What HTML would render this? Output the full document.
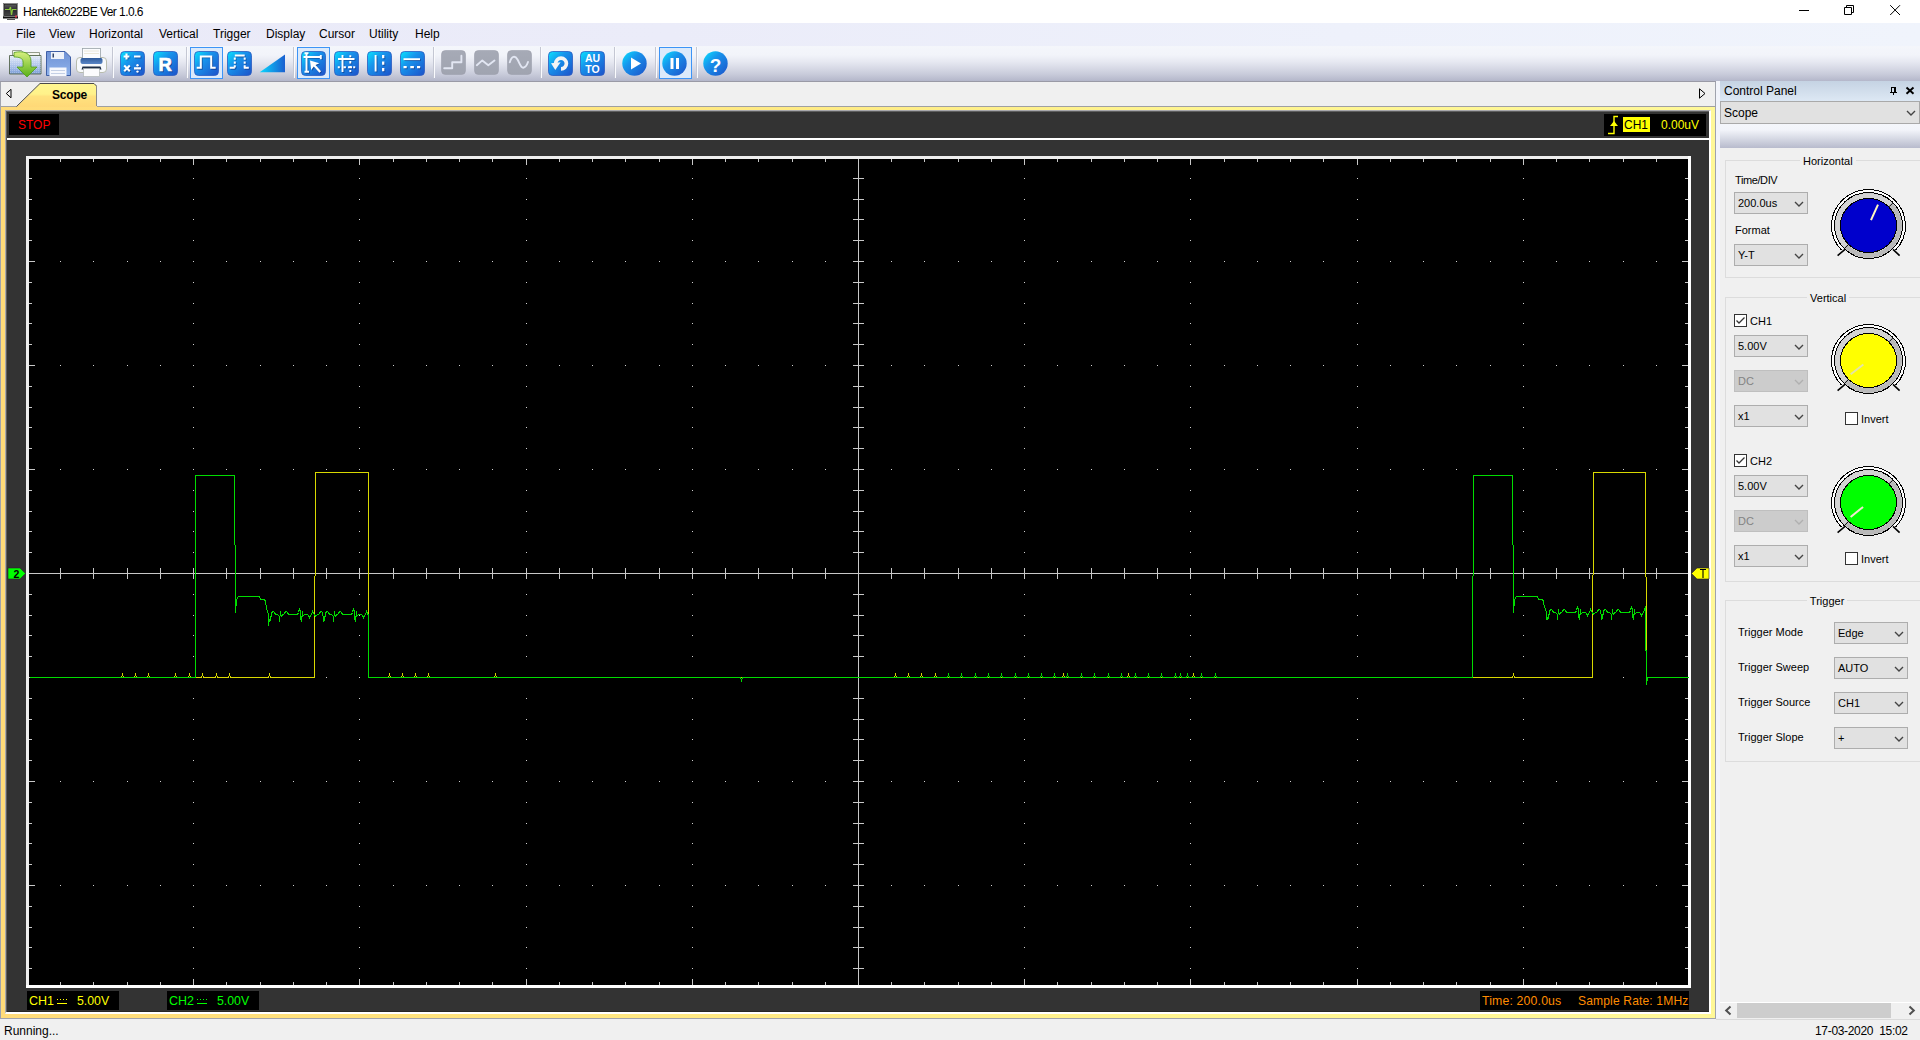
<!DOCTYPE html>
<html><head><meta charset="utf-8"><title>Hantek6022BE Ver 1.0.6</title>
<style>
*{margin:0;padding:0;box-sizing:border-box}
html,body{width:1920px;height:1040px;overflow:hidden;background:#f0f0f0;font-family:"Liberation Sans", sans-serif}
.t{position:absolute;white-space:pre;font-family:"Liberation Sans", sans-serif}
svg{position:absolute;display:block}
</style></head><body>
<div style="position:absolute;left:0px;top:0px;width:1920px;height:23px;background:#fff"></div>
<svg style="left:2px;top:2px" width="18" height="18" viewBox="0 0 18 18">
<defs><linearGradient id="gscr" x1="0" y1="0" x2="0" y2="1"><stop offset="0" stop-color="#5a5a5a"/><stop offset="0.5" stop-color="#2a2a2e"/><stop offset="1" stop-color="#444"/></linearGradient></defs>
<rect x="1.5" y="1.5" width="14" height="14" fill="#d4d4d4" stroke="#777" stroke-width="0.8"/>
<rect x="2.5" y="2.5" width="12" height="11" fill="url(#gscr)" stroke="#222" stroke-width="0.8"/>
<path d="M3 7.5h4.5l1-2.5l1 8l1-5.5h4" fill="none" stroke="#8cc83c" stroke-width="1.2"/>
<rect x="1" y="14.5" width="15" height="2" fill="#111"/><rect x="13" y="13.5" width="2" height="2" fill="#e04050"/>
<rect x="5" y="17" width="8" height="1" fill="#555"/>
</svg>
<div class="t" style="left:23px;top:5.84px;font-size:12px;line-height:12px;color:#000;letter-spacing:-0.55px">Hantek6022BE Ver 1.0.6</div>
<div style="position:absolute;left:1799px;top:10px;width:10px;height:1px;background:#000"></div>
<svg style="left:1843px;top:4px" width="12" height="12" viewBox="0 0 12 12"><path d="M1.5 3.5h7v7h-7z M3.5 3.5v-2h7v7h-2" fill="none" stroke="#000" stroke-width="1"/></svg>
<svg style="left:1889px;top:4px" width="12" height="12" viewBox="0 0 12 12"><path d="M1.2 1.2L11 11M11 1.2L1.2 11" fill="none" stroke="#000" stroke-width="1"/></svg>
<div style="position:absolute;left:0px;top:23px;width:1920px;height:23px;background:linear-gradient(90deg,#eaeaf8 0%,#ebecf9 35%,#eef1fb 70%,#f0f4fc 100%)"></div>
<div class="t" style="left:16px;top:27.84px;font-size:12px;line-height:12px;color:#000;">File</div>
<div class="t" style="left:49px;top:27.84px;font-size:12px;line-height:12px;color:#000;">View</div>
<div class="t" style="left:89px;top:27.84px;font-size:12px;line-height:12px;color:#000;">Horizontal</div>
<div class="t" style="left:159px;top:27.84px;font-size:12px;line-height:12px;color:#000;">Vertical</div>
<div class="t" style="left:213px;top:27.84px;font-size:12px;line-height:12px;color:#000;">Trigger</div>
<div class="t" style="left:266px;top:27.84px;font-size:12px;line-height:12px;color:#000;">Display</div>
<div class="t" style="left:319px;top:27.84px;font-size:12px;line-height:12px;color:#000;">Cursor</div>
<div class="t" style="left:369px;top:27.84px;font-size:12px;line-height:12px;color:#000;">Utility</div>
<div class="t" style="left:415px;top:27.84px;font-size:12px;line-height:12px;color:#000;">Help</div>
<div style="position:absolute;left:0px;top:46px;width:1920px;height:35px;background:linear-gradient(#f4f6fb 0px,#f2f4fa 9px,#e6e8f1 16px,#c9ccdb 28px,#b4b7ca 35px)"></div>
<div style="position:absolute;left:0px;top:81px;width:1920px;height:1px;background:#9a9aa6"></div>
<svg width="0" height="0" style="position:absolute"><defs>
<filter id="fsh" x="-20%" y="-20%" width="140%" height="140%"><feGaussianBlur stdDeviation="0.35"/></filter>
<linearGradient id="gb" x1="0" y1="0" x2="1" y2="1"><stop offset="0" stop-color="#08e4ff"/><stop offset="0.38" stop-color="#1794ec"/><stop offset="1" stop-color="#1d52c9"/></linearGradient>
<linearGradient id="gg" x1="0" y1="0" x2="0" y2="1"><stop offset="0" stop-color="#a6aab6"/><stop offset="1" stop-color="#a0a4b0"/></linearGradient>
<linearGradient id="gramp" x1="0" y1="0" x2="1" y2="0"><stop offset="0" stop-color="#0ad8ff"/><stop offset="1" stop-color="#1a5fd0"/></linearGradient>
<linearGradient id="gfold" x1="0" y1="0" x2="0" y2="1"><stop offset="0" stop-color="#cfe0f4"/><stop offset="1" stop-color="#7b9fd3"/></linearGradient>
<linearGradient id="garr" x1="0" y1="0" x2="0" y2="1"><stop offset="0" stop-color="#d8f080"/><stop offset="1" stop-color="#58b018"/></linearGradient>
</defs></svg>
<svg style="left:8px;top:48px" width="34" height="30" viewBox="0 0 34 30">
<defs><linearGradient id="gfb" x1="0" y1="0" x2="0" y2="1"><stop offset="0" stop-color="#e4ecf8"/><stop offset="0.5" stop-color="#b4c8ec"/><stop offset="1" stop-color="#7d9fd8"/></linearGradient>
<pattern id="pgrid" width="2" height="2" patternUnits="userSpaceOnUse"><rect width="2" height="2" fill="none"/><rect width="1" height="1" fill="#ffffff" opacity="0.25"/></pattern></defs>
<path d="M4.5 2.5h9l1.5 2h16.5v3H4.5z" fill="#f4f6f0" stroke="#7a8470" stroke-width="0.8"/>
<path d="M1.5 7.5h31.5v18.5H1.5z" fill="url(#gfb)" stroke="#56664e" stroke-width="0.9"/>
<path d="M1.5 7.5h31.5v18.5H1.5z" fill="url(#pgrid)"/>
<path d="M6 4.5c9-2 17 0 17 9v5.5h6l-10 10l-10-10h6v-5c0-4-4-5-9-5z" fill="url(#garr)" stroke="#4e9a1a" stroke-width="0.8"/>
</svg>
<svg style="left:46px;top:51px" width="26" height="26" viewBox="0 0 26 26">
<defs><linearGradient id="gfl" x1="0" y1="0" x2="0" y2="1"><stop offset="0" stop-color="#6f92d6"/><stop offset="1" stop-color="#8fb2ea"/></linearGradient></defs>
<path d="M0.5 0.5h18.5l5.5 5.5v18.5H0.5z" fill="url(#gfl)" stroke="#3f5fa6" stroke-width="1"/>
<rect x="5" y="1" width="13" height="7" fill="#eef2fa"/><rect x="6.5" y="2.5" width="1.5" height="4" fill="#34466a"/>
<rect x="3.5" y="16.5" width="17" height="8.5" fill="#f6f8fd"/><path d="M5 19.5h14M5 22.5h14" stroke="#c4d0e6" stroke-width="1"/>
</svg>
<svg style="left:75px;top:47px" width="33" height="31" viewBox="0 0 33 31">
<defs><linearGradient id="gpb" x1="0" y1="0" x2="0" y2="1"><stop offset="0" stop-color="#2f5a9a"/><stop offset="1" stop-color="#5a86c6"/></linearGradient></defs>
<rect x="1.5" y="10.5" width="30" height="15" rx="3.5" fill="#f7f9fc" stroke="#b8bcae" stroke-width="1"/>
<rect x="7.5" y="1.5" width="18" height="10" fill="#fbfcfe" stroke="#9aa4a8" stroke-width="0.8"/>
<path d="M9 4h15M9 6.5h15" stroke="#e8e2d0" stroke-width="0.8"/>
<path d="M7 11h19c1 0 1.5 1 1.5 2v2c0 1-1 2-2 2H7.5c-1 0-2-1-2-2v-2c0-1 .5-2 1.5-2z" fill="url(#gpb)"/>
<path d="M7.5 19.5h18l1 3h-20z" fill="#1c2c44"/>
<rect x="8.5" y="21.5" width="16" height="8" fill="#fbfbfd" stroke="#a8b0b0" stroke-width="0.6"/>
</svg>
<div style="position:absolute;left:112px;top:47px;width:1px;height:31px;background:#c4c7d3;box-shadow:1px 0 0 #fafbfe"></div>
<svg style="left:120px;top:51px" width="25" height="25" viewBox="0 0 25 25"><rect x="0.5" y="0.5" width="24" height="24" rx="4" fill="url(#gb)" stroke="#2a5cc0" stroke-width="0.8"/><g transform="translate(0.9,0.9)" opacity="0.55" filter="url(#fsh)"><path d="M6.5 2.6v5.8M3.6 5.5h5.8M14 5.5h6.5M4.2 14.6l5.6 5.6M9.8 14.6l-5.6 5.6M14 17.4h7" stroke="#102a70" stroke-width="2.1" fill="none"/><circle cx="17.5" cy="14.2" r="1.2" fill="#102a70"/><circle cx="17.5" cy="20.6" r="1.2" fill="#102a70"/></g><path d="M6.5 2.6v5.8M3.6 5.5h5.8M14 5.5h6.5M4.2 14.6l5.6 5.6M9.8 14.6l-5.6 5.6M14 17.4h7" stroke="#fff" stroke-width="2.1" fill="none"/><circle cx="17.5" cy="14.2" r="1.2" fill="#fff"/><circle cx="17.5" cy="20.6" r="1.2" fill="#fff"/></svg>
<svg style="left:153px;top:51px" width="25" height="25" viewBox="0 0 25 25"><rect x="0.5" y="0.5" width="24" height="24" rx="4" fill="url(#gb)" stroke="#2a5cc0" stroke-width="0.8"/><g transform="translate(0.9,0.9)" opacity="0.55" filter="url(#fsh)"><text x="12.3" y="20" text-anchor="middle" font-family="Liberation Sans" font-weight="bold" font-size="18.5" fill="#102a70" stroke="#102a70" stroke-width="0.7">R</text></g><text x="12.3" y="20" text-anchor="middle" font-family="Liberation Sans" font-weight="bold" font-size="18.5" fill="#fff" stroke="#fff" stroke-width="0.7">R</text></svg>
<div style="position:absolute;left:186px;top:47px;width:1px;height:31px;background:#c4c7d3;box-shadow:1px 0 0 #fafbfe"></div>
<div style="position:absolute;left:190px;top:47px;width:33px;height:32px;background:#dbeafb;border:1px solid #3d94f6"></div>
<svg style="left:194px;top:51px" width="25" height="25" viewBox="0 0 25 25"><rect x="0.5" y="0.5" width="24" height="24" rx="4" fill="url(#gb)" stroke="#2a5cc0" stroke-width="0.8"/><g transform="translate(0.9,0.9)" opacity="0.55" filter="url(#fsh)"><path d="M2.7 16.8h4.1V5.4h10.4v11.4h4.5" fill="none" stroke="#102a70" stroke-width="2"/></g><path d="M2.7 16.8h4.1V5.4h10.4v11.4h4.5" fill="none" stroke="#fff" stroke-width="2"/></svg>
<svg style="left:227px;top:51px" width="25" height="25" viewBox="0 0 25 25"><rect x="0.5" y="0.5" width="24" height="24" rx="4" fill="url(#gb)" stroke="#2a5cc0" stroke-width="0.8"/><g transform="translate(0.9,0.9)" opacity="0.55" filter="url(#fsh)"><path d="M2.7 16.8h5.1M16.8 16.8h5M7.8 4.5h9.9" stroke="#102a70" stroke-width="2" fill="none"/><path d="M7.8 6.5v2.2M7.8 10.5v2.2M7.8 14.3v2.2M17.7 6.5v2.2M17.7 10.5v2.2M17.7 14.3v2.2" stroke="#102a70" stroke-width="2" fill="none"/></g><path d="M2.7 16.8h5.1M16.8 16.8h5M7.8 4.5h9.9" stroke="#fff" stroke-width="2" fill="none"/><path d="M7.8 6.5v2.2M7.8 10.5v2.2M7.8 14.3v2.2M17.7 6.5v2.2M17.7 10.5v2.2M17.7 14.3v2.2" stroke="#fff" stroke-width="2" fill="none"/></svg>
<svg style="left:259px;top:54px" width="27" height="20" viewBox="0 0 27 20"><path d="M0.7 18.3L26 0.6V18.3z" fill="url(#gramp)"/></svg>
<div style="position:absolute;left:293px;top:47px;width:1px;height:31px;background:#c4c7d3;box-shadow:1px 0 0 #fafbfe"></div>
<div style="position:absolute;left:297px;top:47px;width:33px;height:32px;background:#dbeafb;border:1px solid #3d94f6"></div>
<svg style="left:301px;top:51px" width="25" height="25" viewBox="0 0 25 25"><rect x="0.5" y="0.5" width="24" height="24" rx="4" fill="url(#gb)" stroke="#2a5cc0" stroke-width="0.8"/><g transform="translate(0.9,0.9)" opacity="0.55" filter="url(#fsh)"><path d="M5.5 2v19M3.5 2.2h4M3.5 20.8h4.5M2.5 6h17.5M19.8 4v4.2" stroke="#102a70" stroke-width="1.9" fill="none"/><path d="M9 9.5L10.2 19l2.6-3.4l5.6 6.2l1.7-1.6l-5.6-6.1l3.9-1.9z" fill="#102a70"/></g><path d="M5.5 2v19M3.5 2.2h4M3.5 20.8h4.5M2.5 6h17.5M19.8 4v4.2" stroke="#fff" stroke-width="1.9" fill="none"/><path d="M9 9.5L10.2 19l2.6-3.4l5.6 6.2l1.7-1.6l-5.6-6.1l3.9-1.9z" fill="#fff"/></svg>
<svg style="left:334px;top:51px" width="25" height="25" viewBox="0 0 25 25"><rect x="0.5" y="0.5" width="24" height="24" rx="4" fill="url(#gb)" stroke="#2a5cc0" stroke-width="0.8"/><g transform="translate(0.9,0.9)" opacity="0.55" filter="url(#fsh)"><path d="M8.5 4v17M4 8h16.5" stroke="#102a70" stroke-width="1.9" fill="none"/><path d="M16.3 4.3v2M16.3 10v2.6M16.3 15v2.2M16.3 19v2M3.8 16.3h2M9.5 16.3h2.4M14 16.3h4M19.2 16.3h2" stroke="#102a70" stroke-width="1.9" fill="none"/></g><path d="M8.5 4v17M4 8h16.5" stroke="#fff" stroke-width="1.9" fill="none"/><path d="M16.3 4.3v2M16.3 10v2.6M16.3 15v2.2M16.3 19v2M3.8 16.3h2M9.5 16.3h2.4M14 16.3h4M19.2 16.3h2" stroke="#fff" stroke-width="1.9" fill="none"/></svg>
<svg style="left:367px;top:51px" width="25" height="25" viewBox="0 0 25 25"><rect x="0.5" y="0.5" width="24" height="24" rx="4" fill="url(#gb)" stroke="#2a5cc0" stroke-width="0.8"/><g transform="translate(0.9,0.9)" opacity="0.55" filter="url(#fsh)"><path d="M8.6 4v16.5" stroke="#102a70" stroke-width="1.9" fill="none"/><path d="M16.2 4v3.3M16.2 10.5v3.3M16.2 17v3.3" stroke="#102a70" stroke-width="2.3" fill="none"/></g><path d="M8.6 4v16.5" stroke="#fff" stroke-width="1.9" fill="none"/><path d="M16.2 4v3.3M16.2 10.5v3.3M16.2 17v3.3" stroke="#fff" stroke-width="2.3" fill="none"/></svg>
<svg style="left:400px;top:51px" width="25" height="25" viewBox="0 0 25 25"><rect x="0.5" y="0.5" width="24" height="24" rx="4" fill="url(#gb)" stroke="#2a5cc0" stroke-width="0.8"/><g transform="translate(0.9,0.9)" opacity="0.55" filter="url(#fsh)"><path d="M3.5 8.2h16.5" stroke="#102a70" stroke-width="1.9" fill="none"/><path d="M3.5 16.2h3.2M10.3 16.2h3.6M17 16.2h3.2" stroke="#102a70" stroke-width="2.3" fill="none"/></g><path d="M3.5 8.2h16.5" stroke="#fff" stroke-width="1.9" fill="none"/><path d="M3.5 16.2h3.2M10.3 16.2h3.6M17 16.2h3.2" stroke="#fff" stroke-width="2.3" fill="none"/></svg>
<div style="position:absolute;left:433px;top:47px;width:1px;height:31px;background:#c4c7d3;box-shadow:1px 0 0 #fafbfe"></div>
<svg style="left:441px;top:50px" width="25" height="25" viewBox="0 0 25 25"><rect x="0.5" y="0.5" width="24" height="24" rx="4" fill="url(#gg)" stroke="#9ca0ac" stroke-width="0.6"/><path d="M3.2 18.2h8V12.2h9.2V5.8" fill="none" stroke="#e2e6f2" stroke-width="1.9" stroke-linejoin="round" stroke-linecap="round"/></svg>
<svg style="left:474px;top:50px" width="25" height="25" viewBox="0 0 25 25"><rect x="0.5" y="0.5" width="24" height="24" rx="4" fill="url(#gg)" stroke="#9ca0ac" stroke-width="0.6"/><path d="M2.8 15.2L8.3 10.4L14.3 15.2L20.5 10.6" fill="none" stroke="#e2e6f2" stroke-width="1.9" stroke-linejoin="round" stroke-linecap="round"/></svg>
<svg style="left:507px;top:50px" width="25" height="25" viewBox="0 0 25 25"><rect x="0.5" y="0.5" width="24" height="24" rx="4" fill="url(#gg)" stroke="#9ca0ac" stroke-width="0.6"/><path d="M2.8 12.3C4.5 6 8 5 10.5 9.5S14 18 16.2 17.7S20 15 21 12" fill="none" stroke="#e2e6f2" stroke-width="1.9" stroke-linejoin="round" stroke-linecap="round"/></svg>
<div style="position:absolute;left:540px;top:47px;width:1px;height:31px;background:#c4c7d3;box-shadow:1px 0 0 #fafbfe"></div>
<svg style="left:548px;top:51px" width="25" height="25" viewBox="0 0 25 25"><rect x="0.5" y="0.5" width="24" height="24" rx="4" fill="url(#gb)" stroke="#2a5cc0" stroke-width="0.8"/><path d="M13 17.9A5.35 5.35 0 1 0 7.7 12.6" fill="none" stroke="#f4f4f4" stroke-width="3.7"/><path d="M3 12.3L12.6 11.2L7.3 18.9z" fill="#f4f4f4"/></svg>
<svg style="left:580px;top:51px" width="25" height="25" viewBox="0 0 25 25"><rect x="0.5" y="0.5" width="24" height="24" rx="4" fill="url(#gb)" stroke="#2a5cc0" stroke-width="0.8"/><text x="12.5" y="11" text-anchor="middle" font-family="Liberation Sans" font-weight="bold" font-size="10.5" fill="#fff">AU</text><text x="12.5" y="22" text-anchor="middle" font-family="Liberation Sans" font-weight="bold" font-size="10.5" fill="#fff">TO</text></svg>
<div style="position:absolute;left:614px;top:47px;width:1px;height:31px;background:#c4c7d3;box-shadow:1px 0 0 #fafbfe"></div>
<svg style="left:622px;top:51px" width="25" height="25" viewBox="0 0 25 25"><circle cx="12.5" cy="12.5" r="12.2" fill="url(#gb)"/><path d="M9 6.5v12l10-6z" fill="#fff"/></svg>
<div style="position:absolute;left:655px;top:47px;width:1px;height:31px;background:#c4c7d3;box-shadow:1px 0 0 #fafbfe"></div>
<div style="position:absolute;left:659px;top:47px;width:33px;height:32px;background:#dbeafb;border:1px solid #3d94f6"></div>
<svg style="left:662px;top:51px" width="25" height="25" viewBox="0 0 25 25"><circle cx="12.5" cy="12.5" r="12.2" fill="url(#gb)"/><rect x="8.5" y="7" width="3" height="11" fill="#fff"/><rect x="14" y="7" width="3" height="11" fill="#fff"/></svg>
<div style="position:absolute;left:696px;top:47px;width:1px;height:31px;background:#c4c7d3;box-shadow:1px 0 0 #fafbfe"></div>
<svg style="left:703px;top:51px" width="25" height="25" viewBox="0 0 25 25"><circle cx="12.5" cy="12.5" r="12.2" fill="url(#gb)"/><text x="12.5" y="20.5" text-anchor="middle" font-family="Liberation Sans" font-weight="bold" font-size="19" fill="#fff">?</text></svg>
<div style="position:absolute;left:0px;top:82px;width:1px;height:937px;background:#a0a3ad"></div>
<div style="position:absolute;left:1715px;top:82px;width:1px;height:937px;background:#a0a3ad"></div>
<div style="position:absolute;left:1px;top:82px;width:1714px;height:24px;background:#f0f0f0"></div>
<div style="position:absolute;left:1px;top:106px;width:1714px;height:1px;background:#a0a0a0"></div>
<svg style="left:16px;top:82px" width="84" height="26" viewBox="0 0 84 26">
<defs><linearGradient id="gtab" x1="0" y1="0" x2="0" y2="1"><stop offset="0" stop-color="#fff790"/><stop offset="0.45" stop-color="#fff28a"/><stop offset="0.55" stop-color="#ffe27e"/><stop offset="1" stop-color="#ffd877"/></linearGradient></defs>
<path d="M0.5 25 L24 1.5 H78 L81 4.5 V25 Z" fill="url(#gtab)"/>
<path d="M0.5 24.5 L24 1.5 H78 L80.5 4" fill="none" stroke="#4a4a4a" stroke-width="1"/>
<path d="M80.5 4 V24" fill="none" stroke="#8a8a8a" stroke-width="1"/>
</svg>
<div class="t" style="left:52px;top:88.84px;font-size:12px;line-height:12px;color:#000;font-weight:bold;letter-spacing:-0.2px">Scope</div>
<svg style="left:5px;top:88px" width="8" height="11" viewBox="0 0 8 11"><path d="M6 1.3V9.8L1.3 5.5z" fill="none" stroke="#000" stroke-width="1"/></svg>
<svg style="left:1698px;top:88px" width="8" height="11" viewBox="0 0 8 11"><path d="M1.5 0.8V10.2L7 5.5z" fill="none" stroke="#000" stroke-width="1"/></svg>
<div style="position:absolute;left:1px;top:107px;width:1714px;height:911px;background:linear-gradient(90deg,#ffdb79 0%,#ffe27c 23%,#ffec86 50%,#fff590 70%,#fff898 100%)"></div>
<div style="position:absolute;left:5px;top:110px;width:1706px;height:904px;background:#333;border-top:1px solid #a8a8ac;border-left:1px solid #a8a8ac;box-shadow:inset 1px 1px 0 #5e5e5e;border-bottom:2px solid #fff;border-right:2px solid #fff"></div>
<div style="position:absolute;left:7px;top:138px;width:1704px;height:2px;background:#fff"></div>
<div style="position:absolute;left:7px;top:1011px;width:1702px;height:1px;background:#262626"></div>
<div style="position:absolute;left:9px;top:114px;width:50px;height:21px;background:#000"></div>
<div class="t" style="left:18px;top:118.84px;font-size:12px;line-height:12px;color:#ff0000;">STOP</div>
<div style="position:absolute;left:1604px;top:114px;width:102px;height:22px;background:#000"></div>
<svg style="left:1606px;top:114px" width="14" height="21" viewBox="0 0 14 21"><path d="M2 19.5h6V2.5h4" fill="none" stroke="#ffff00" stroke-width="1.4"/><path d="M4 12h8L8 7z" fill="#ffff00"/></svg>
<div style="position:absolute;left:1623px;top:117px;width:27px;height:15px;background:#ffff00"></div>
<div class="t" style="left:1624px;top:118.84px;font-size:12px;line-height:12px;color:#000;">CH1</div>
<div class="t" style="left:1661px;top:118.84px;font-size:12px;line-height:12px;color:#ffff00;">0.00uV</div>
<div style="position:absolute;left:27px;top:991px;width:92px;height:19px;background:#000"></div>
<div class="t" style="left:29px;top:995.42px;font-size:12.5px;line-height:12.5px;color:#ffff00;">CH1</div>
<svg style="left:57px;top:999px" width="10" height="5" viewBox="0 0 10 5" shape-rendering="crispEdges"><path d="M0 0h1v1H0zM3 0h1v1H3zM6 0h1v1H6zM9 0h1v1H9zM0 4h10v1H0z" fill="#ffff00"/></svg>
<div class="t" style="left:77px;top:994.59px;font-size:12.3px;line-height:12.3px;color:#ffff00;">5.00V</div>
<div style="position:absolute;left:167px;top:991px;width:92px;height:19px;background:#000"></div>
<div class="t" style="left:169px;top:995.42px;font-size:12.5px;line-height:12.5px;color:#00ff00;">CH2</div>
<svg style="left:197px;top:999px" width="10" height="5" viewBox="0 0 10 5" shape-rendering="crispEdges"><path d="M0 0h1v1H0zM3 0h1v1H3zM6 0h1v1H6zM9 0h1v1H9zM0 4h10v1H0z" fill="#00ff00"/></svg>
<div class="t" style="left:217px;top:994.59px;font-size:12.3px;line-height:12.3px;color:#00ff00;">5.00V</div>
<div style="position:absolute;left:1480px;top:991px;width:209px;height:19px;background:#000"></div>
<div class="t" style="left:1482px;top:994.59px;font-size:12.3px;line-height:12.3px;color:#ff8c00;letter-spacing:0.15px">Time: 200.0us</div>
<div class="t" style="left:1578px;top:994.76px;font-size:12.1px;line-height:12.1px;color:#ff8c00;letter-spacing:0.13px">Sample Rate: 1MHz</div>
<svg style="left:7px;top:567px" width="20" height="14" viewBox="0 0 20 14"><path d="M1 1H13L18.5 6.5L13 12H1z" fill="#00ff00" stroke="#302030" stroke-width="0.6"/><text x="9.5" y="11" text-anchor="middle" font-family="Liberation Sans" font-weight="bold" font-size="10.5" fill="#000">2</text></svg>
<svg style="left:1690px;top:567px" width="20" height="14" viewBox="0 0 20 14"><path d="M19 1H7L1.5 6.5L7 12H19z" fill="#ffff00" stroke="#202030" stroke-width="0.6"/><path d="M10 2.5h6M13 2.5V11" stroke="#000" stroke-width="1.1"/></svg>
<svg style="left:26px;top:156px" width="1665" height="832" viewBox="0 0 1665 832" shape-rendering="crispEdges">
<rect x="0" y="0" width="1665" height="832" fill="#fff"/>
<rect x="0" y="0" width="1662" height="3" fill="#eeeeee"/><rect x="0" y="0" width="3" height="829" fill="#eeeeee"/>
<rect x="3" y="3" width="1659" height="826" fill="#000"/>
<path d="M832 3h1v826h-1zM3 417h1659v1h-1659zM34 412h1v11h-1zM34 3h1v3h-1zM34 826h1v3h-1zM67 412h1v11h-1zM67 3h1v3h-1zM67 826h1v3h-1zM101 412h1v11h-1zM101 3h1v3h-1zM101 826h1v3h-1zM134 412h1v11h-1zM134 3h1v3h-1zM134 826h1v3h-1zM167 412h1v11h-1zM167 3h1v6h-1zM167 823h1v6h-1zM200 412h1v11h-1zM200 3h1v3h-1zM200 826h1v3h-1zM234 412h1v11h-1zM234 3h1v3h-1zM234 826h1v3h-1zM267 412h1v11h-1zM267 3h1v3h-1zM267 826h1v3h-1zM300 412h1v11h-1zM300 3h1v3h-1zM300 826h1v3h-1zM333 412h1v11h-1zM333 3h1v6h-1zM333 823h1v6h-1zM367 412h1v11h-1zM367 3h1v3h-1zM367 826h1v3h-1zM400 412h1v11h-1zM400 3h1v3h-1zM400 826h1v3h-1zM433 412h1v11h-1zM433 3h1v3h-1zM433 826h1v3h-1zM466 412h1v11h-1zM466 3h1v3h-1zM466 826h1v3h-1zM500 412h1v11h-1zM500 3h1v6h-1zM500 823h1v6h-1zM533 412h1v11h-1zM533 3h1v3h-1zM533 826h1v3h-1zM566 412h1v11h-1zM566 3h1v3h-1zM566 826h1v3h-1zM599 412h1v11h-1zM599 3h1v3h-1zM599 826h1v3h-1zM633 412h1v11h-1zM633 3h1v3h-1zM633 826h1v3h-1zM666 412h1v11h-1zM666 3h1v6h-1zM666 823h1v6h-1zM699 412h1v11h-1zM699 3h1v3h-1zM699 826h1v3h-1zM732 412h1v11h-1zM732 3h1v3h-1zM732 826h1v3h-1zM766 412h1v11h-1zM766 3h1v3h-1zM766 826h1v3h-1zM799 412h1v11h-1zM799 3h1v3h-1zM799 826h1v3h-1zM865 412h1v11h-1zM865 3h1v3h-1zM865 826h1v3h-1zM898 412h1v11h-1zM898 3h1v3h-1zM898 826h1v3h-1zM932 412h1v11h-1zM932 3h1v3h-1zM932 826h1v3h-1zM965 412h1v11h-1zM965 3h1v3h-1zM965 826h1v3h-1zM998 412h1v11h-1zM998 3h1v6h-1zM998 823h1v6h-1zM1031 412h1v11h-1zM1031 3h1v3h-1zM1031 826h1v3h-1zM1065 412h1v11h-1zM1065 3h1v3h-1zM1065 826h1v3h-1zM1098 412h1v11h-1zM1098 3h1v3h-1zM1098 826h1v3h-1zM1131 412h1v11h-1zM1131 3h1v3h-1zM1131 826h1v3h-1zM1164 412h1v11h-1zM1164 3h1v6h-1zM1164 823h1v6h-1zM1198 412h1v11h-1zM1198 3h1v3h-1zM1198 826h1v3h-1zM1231 412h1v11h-1zM1231 3h1v3h-1zM1231 826h1v3h-1zM1264 412h1v11h-1zM1264 3h1v3h-1zM1264 826h1v3h-1zM1297 412h1v11h-1zM1297 3h1v3h-1zM1297 826h1v3h-1zM1331 412h1v11h-1zM1331 3h1v6h-1zM1331 823h1v6h-1zM1364 412h1v11h-1zM1364 3h1v3h-1zM1364 826h1v3h-1zM1397 412h1v11h-1zM1397 3h1v3h-1zM1397 826h1v3h-1zM1430 412h1v11h-1zM1430 3h1v3h-1zM1430 826h1v3h-1zM1464 412h1v11h-1zM1464 3h1v3h-1zM1464 826h1v3h-1zM1497 412h1v11h-1zM1497 3h1v6h-1zM1497 823h1v6h-1zM1530 412h1v11h-1zM1530 3h1v3h-1zM1530 826h1v3h-1zM1563 412h1v11h-1zM1563 3h1v3h-1zM1563 826h1v3h-1zM1597 412h1v11h-1zM1597 3h1v3h-1zM1597 826h1v3h-1zM1630 412h1v11h-1zM1630 3h1v3h-1zM1630 826h1v3h-1zM827 22h11v1h-11zM3 22h3v1h-3zM1659 22h3v1h-3zM827 43h11v1h-11zM3 43h3v1h-3zM1659 43h3v1h-3zM827 63h11v1h-11zM3 63h3v1h-3zM1659 63h3v1h-3zM827 84h11v1h-11zM3 84h3v1h-3zM1659 84h3v1h-3zM827 105h11v1h-11zM3 105h6v1h-6zM1656 105h6v1h-6zM827 126h11v1h-11zM3 126h3v1h-3zM1659 126h3v1h-3zM827 147h11v1h-11zM3 147h3v1h-3zM1659 147h3v1h-3zM827 167h11v1h-11zM3 167h3v1h-3zM1659 167h3v1h-3zM827 188h11v1h-11zM3 188h3v1h-3zM1659 188h3v1h-3zM827 209h11v1h-11zM3 209h6v1h-6zM1656 209h6v1h-6zM827 230h11v1h-11zM3 230h3v1h-3zM1659 230h3v1h-3zM827 251h11v1h-11zM3 251h3v1h-3zM1659 251h3v1h-3zM827 271h11v1h-11zM3 271h3v1h-3zM1659 271h3v1h-3zM827 292h11v1h-11zM3 292h3v1h-3zM1659 292h3v1h-3zM827 313h11v1h-11zM3 313h6v1h-6zM1656 313h6v1h-6zM827 334h11v1h-11zM3 334h3v1h-3zM1659 334h3v1h-3zM827 355h11v1h-11zM3 355h3v1h-3zM1659 355h3v1h-3zM827 375h11v1h-11zM3 375h3v1h-3zM1659 375h3v1h-3zM827 396h11v1h-11zM3 396h3v1h-3zM1659 396h3v1h-3zM827 438h11v1h-11zM3 438h3v1h-3zM1659 438h3v1h-3zM827 459h11v1h-11zM3 459h3v1h-3zM1659 459h3v1h-3zM827 479h11v1h-11zM3 479h3v1h-3zM1659 479h3v1h-3zM827 500h11v1h-11zM3 500h3v1h-3zM1659 500h3v1h-3zM827 521h11v1h-11zM3 521h6v1h-6zM1656 521h6v1h-6zM827 542h11v1h-11zM3 542h3v1h-3zM1659 542h3v1h-3zM827 563h11v1h-11zM3 563h3v1h-3zM1659 563h3v1h-3zM827 583h11v1h-11zM3 583h3v1h-3zM1659 583h3v1h-3zM827 604h11v1h-11zM3 604h3v1h-3zM1659 604h3v1h-3zM827 625h11v1h-11zM3 625h6v1h-6zM1656 625h6v1h-6zM827 646h11v1h-11zM3 646h3v1h-3zM1659 646h3v1h-3zM827 667h11v1h-11zM3 667h3v1h-3zM1659 667h3v1h-3zM827 687h11v1h-11zM3 687h3v1h-3zM1659 687h3v1h-3zM827 708h11v1h-11zM3 708h3v1h-3zM1659 708h3v1h-3zM827 729h11v1h-11zM3 729h6v1h-6zM1656 729h6v1h-6zM827 750h11v1h-11zM3 750h3v1h-3zM1659 750h3v1h-3zM827 771h11v1h-11zM3 771h3v1h-3zM1659 771h3v1h-3zM827 791h11v1h-11zM3 791h3v1h-3zM1659 791h3v1h-3zM827 812h11v1h-11zM3 812h3v1h-3zM1659 812h3v1h-3z" fill="#c8c8c8"/>
<path d="M34 105h1v1h-1zM67 105h1v1h-1zM101 105h1v1h-1zM134 105h1v1h-1zM167 105h1v1h-1zM200 105h1v1h-1zM234 105h1v1h-1zM267 105h1v1h-1zM300 105h1v1h-1zM333 105h1v1h-1zM367 105h1v1h-1zM400 105h1v1h-1zM433 105h1v1h-1zM466 105h1v1h-1zM500 105h1v1h-1zM533 105h1v1h-1zM566 105h1v1h-1zM599 105h1v1h-1zM633 105h1v1h-1zM666 105h1v1h-1zM699 105h1v1h-1zM732 105h1v1h-1zM766 105h1v1h-1zM799 105h1v1h-1zM865 105h1v1h-1zM898 105h1v1h-1zM932 105h1v1h-1zM965 105h1v1h-1zM998 105h1v1h-1zM1031 105h1v1h-1zM1065 105h1v1h-1zM1098 105h1v1h-1zM1131 105h1v1h-1zM1164 105h1v1h-1zM1198 105h1v1h-1zM1231 105h1v1h-1zM1264 105h1v1h-1zM1297 105h1v1h-1zM1331 105h1v1h-1zM1364 105h1v1h-1zM1397 105h1v1h-1zM1430 105h1v1h-1zM1464 105h1v1h-1zM1497 105h1v1h-1zM1530 105h1v1h-1zM1563 105h1v1h-1zM1597 105h1v1h-1zM1630 105h1v1h-1zM34 209h1v1h-1zM67 209h1v1h-1zM101 209h1v1h-1zM134 209h1v1h-1zM167 209h1v1h-1zM200 209h1v1h-1zM234 209h1v1h-1zM267 209h1v1h-1zM300 209h1v1h-1zM333 209h1v1h-1zM367 209h1v1h-1zM400 209h1v1h-1zM433 209h1v1h-1zM466 209h1v1h-1zM500 209h1v1h-1zM533 209h1v1h-1zM566 209h1v1h-1zM599 209h1v1h-1zM633 209h1v1h-1zM666 209h1v1h-1zM699 209h1v1h-1zM732 209h1v1h-1zM766 209h1v1h-1zM799 209h1v1h-1zM865 209h1v1h-1zM898 209h1v1h-1zM932 209h1v1h-1zM965 209h1v1h-1zM998 209h1v1h-1zM1031 209h1v1h-1zM1065 209h1v1h-1zM1098 209h1v1h-1zM1131 209h1v1h-1zM1164 209h1v1h-1zM1198 209h1v1h-1zM1231 209h1v1h-1zM1264 209h1v1h-1zM1297 209h1v1h-1zM1331 209h1v1h-1zM1364 209h1v1h-1zM1397 209h1v1h-1zM1430 209h1v1h-1zM1464 209h1v1h-1zM1497 209h1v1h-1zM1530 209h1v1h-1zM1563 209h1v1h-1zM1597 209h1v1h-1zM1630 209h1v1h-1zM34 313h1v1h-1zM67 313h1v1h-1zM101 313h1v1h-1zM134 313h1v1h-1zM167 313h1v1h-1zM200 313h1v1h-1zM234 313h1v1h-1zM267 313h1v1h-1zM300 313h1v1h-1zM333 313h1v1h-1zM367 313h1v1h-1zM400 313h1v1h-1zM433 313h1v1h-1zM466 313h1v1h-1zM500 313h1v1h-1zM533 313h1v1h-1zM566 313h1v1h-1zM599 313h1v1h-1zM633 313h1v1h-1zM666 313h1v1h-1zM699 313h1v1h-1zM732 313h1v1h-1zM766 313h1v1h-1zM799 313h1v1h-1zM865 313h1v1h-1zM898 313h1v1h-1zM932 313h1v1h-1zM965 313h1v1h-1zM998 313h1v1h-1zM1031 313h1v1h-1zM1065 313h1v1h-1zM1098 313h1v1h-1zM1131 313h1v1h-1zM1164 313h1v1h-1zM1198 313h1v1h-1zM1231 313h1v1h-1zM1264 313h1v1h-1zM1297 313h1v1h-1zM1331 313h1v1h-1zM1364 313h1v1h-1zM1397 313h1v1h-1zM1430 313h1v1h-1zM1464 313h1v1h-1zM1497 313h1v1h-1zM1530 313h1v1h-1zM1563 313h1v1h-1zM1597 313h1v1h-1zM1630 313h1v1h-1zM34 521h1v1h-1zM67 521h1v1h-1zM101 521h1v1h-1zM134 521h1v1h-1zM167 521h1v1h-1zM200 521h1v1h-1zM234 521h1v1h-1zM267 521h1v1h-1zM300 521h1v1h-1zM333 521h1v1h-1zM367 521h1v1h-1zM400 521h1v1h-1zM433 521h1v1h-1zM466 521h1v1h-1zM500 521h1v1h-1zM533 521h1v1h-1zM566 521h1v1h-1zM599 521h1v1h-1zM633 521h1v1h-1zM666 521h1v1h-1zM699 521h1v1h-1zM732 521h1v1h-1zM766 521h1v1h-1zM799 521h1v1h-1zM865 521h1v1h-1zM898 521h1v1h-1zM932 521h1v1h-1zM965 521h1v1h-1zM998 521h1v1h-1zM1031 521h1v1h-1zM1065 521h1v1h-1zM1098 521h1v1h-1zM1131 521h1v1h-1zM1164 521h1v1h-1zM1198 521h1v1h-1zM1231 521h1v1h-1zM1264 521h1v1h-1zM1297 521h1v1h-1zM1331 521h1v1h-1zM1364 521h1v1h-1zM1397 521h1v1h-1zM1430 521h1v1h-1zM1464 521h1v1h-1zM1497 521h1v1h-1zM1530 521h1v1h-1zM1563 521h1v1h-1zM1597 521h1v1h-1zM1630 521h1v1h-1zM34 625h1v1h-1zM67 625h1v1h-1zM101 625h1v1h-1zM134 625h1v1h-1zM167 625h1v1h-1zM200 625h1v1h-1zM234 625h1v1h-1zM267 625h1v1h-1zM300 625h1v1h-1zM333 625h1v1h-1zM367 625h1v1h-1zM400 625h1v1h-1zM433 625h1v1h-1zM466 625h1v1h-1zM500 625h1v1h-1zM533 625h1v1h-1zM566 625h1v1h-1zM599 625h1v1h-1zM633 625h1v1h-1zM666 625h1v1h-1zM699 625h1v1h-1zM732 625h1v1h-1zM766 625h1v1h-1zM799 625h1v1h-1zM865 625h1v1h-1zM898 625h1v1h-1zM932 625h1v1h-1zM965 625h1v1h-1zM998 625h1v1h-1zM1031 625h1v1h-1zM1065 625h1v1h-1zM1098 625h1v1h-1zM1131 625h1v1h-1zM1164 625h1v1h-1zM1198 625h1v1h-1zM1231 625h1v1h-1zM1264 625h1v1h-1zM1297 625h1v1h-1zM1331 625h1v1h-1zM1364 625h1v1h-1zM1397 625h1v1h-1zM1430 625h1v1h-1zM1464 625h1v1h-1zM1497 625h1v1h-1zM1530 625h1v1h-1zM1563 625h1v1h-1zM1597 625h1v1h-1zM1630 625h1v1h-1zM34 729h1v1h-1zM67 729h1v1h-1zM101 729h1v1h-1zM134 729h1v1h-1zM167 729h1v1h-1zM200 729h1v1h-1zM234 729h1v1h-1zM267 729h1v1h-1zM300 729h1v1h-1zM333 729h1v1h-1zM367 729h1v1h-1zM400 729h1v1h-1zM433 729h1v1h-1zM466 729h1v1h-1zM500 729h1v1h-1zM533 729h1v1h-1zM566 729h1v1h-1zM599 729h1v1h-1zM633 729h1v1h-1zM666 729h1v1h-1zM699 729h1v1h-1zM732 729h1v1h-1zM766 729h1v1h-1zM799 729h1v1h-1zM865 729h1v1h-1zM898 729h1v1h-1zM932 729h1v1h-1zM965 729h1v1h-1zM998 729h1v1h-1zM1031 729h1v1h-1zM1065 729h1v1h-1zM1098 729h1v1h-1zM1131 729h1v1h-1zM1164 729h1v1h-1zM1198 729h1v1h-1zM1231 729h1v1h-1zM1264 729h1v1h-1zM1297 729h1v1h-1zM1331 729h1v1h-1zM1364 729h1v1h-1zM1397 729h1v1h-1zM1430 729h1v1h-1zM1464 729h1v1h-1zM1497 729h1v1h-1zM1530 729h1v1h-1zM1563 729h1v1h-1zM1597 729h1v1h-1zM1630 729h1v1h-1zM167 22h1v1h-1zM167 43h1v1h-1zM167 63h1v1h-1zM167 84h1v1h-1zM167 126h1v1h-1zM167 147h1v1h-1zM167 167h1v1h-1zM167 188h1v1h-1zM167 230h1v1h-1zM167 251h1v1h-1zM167 271h1v1h-1zM167 292h1v1h-1zM167 334h1v1h-1zM167 355h1v1h-1zM167 375h1v1h-1zM167 396h1v1h-1zM167 438h1v1h-1zM167 459h1v1h-1zM167 479h1v1h-1zM167 500h1v1h-1zM167 542h1v1h-1zM167 563h1v1h-1zM167 583h1v1h-1zM167 604h1v1h-1zM167 646h1v1h-1zM167 667h1v1h-1zM167 687h1v1h-1zM167 708h1v1h-1zM167 750h1v1h-1zM167 771h1v1h-1zM167 791h1v1h-1zM167 812h1v1h-1zM333 22h1v1h-1zM333 43h1v1h-1zM333 63h1v1h-1zM333 84h1v1h-1zM333 126h1v1h-1zM333 147h1v1h-1zM333 167h1v1h-1zM333 188h1v1h-1zM333 230h1v1h-1zM333 251h1v1h-1zM333 271h1v1h-1zM333 292h1v1h-1zM333 334h1v1h-1zM333 355h1v1h-1zM333 375h1v1h-1zM333 396h1v1h-1zM333 438h1v1h-1zM333 459h1v1h-1zM333 479h1v1h-1zM333 500h1v1h-1zM333 542h1v1h-1zM333 563h1v1h-1zM333 583h1v1h-1zM333 604h1v1h-1zM333 646h1v1h-1zM333 667h1v1h-1zM333 687h1v1h-1zM333 708h1v1h-1zM333 750h1v1h-1zM333 771h1v1h-1zM333 791h1v1h-1zM333 812h1v1h-1zM500 22h1v1h-1zM500 43h1v1h-1zM500 63h1v1h-1zM500 84h1v1h-1zM500 126h1v1h-1zM500 147h1v1h-1zM500 167h1v1h-1zM500 188h1v1h-1zM500 230h1v1h-1zM500 251h1v1h-1zM500 271h1v1h-1zM500 292h1v1h-1zM500 334h1v1h-1zM500 355h1v1h-1zM500 375h1v1h-1zM500 396h1v1h-1zM500 438h1v1h-1zM500 459h1v1h-1zM500 479h1v1h-1zM500 500h1v1h-1zM500 542h1v1h-1zM500 563h1v1h-1zM500 583h1v1h-1zM500 604h1v1h-1zM500 646h1v1h-1zM500 667h1v1h-1zM500 687h1v1h-1zM500 708h1v1h-1zM500 750h1v1h-1zM500 771h1v1h-1zM500 791h1v1h-1zM500 812h1v1h-1zM666 22h1v1h-1zM666 43h1v1h-1zM666 63h1v1h-1zM666 84h1v1h-1zM666 126h1v1h-1zM666 147h1v1h-1zM666 167h1v1h-1zM666 188h1v1h-1zM666 230h1v1h-1zM666 251h1v1h-1zM666 271h1v1h-1zM666 292h1v1h-1zM666 334h1v1h-1zM666 355h1v1h-1zM666 375h1v1h-1zM666 396h1v1h-1zM666 438h1v1h-1zM666 459h1v1h-1zM666 479h1v1h-1zM666 500h1v1h-1zM666 542h1v1h-1zM666 563h1v1h-1zM666 583h1v1h-1zM666 604h1v1h-1zM666 646h1v1h-1zM666 667h1v1h-1zM666 687h1v1h-1zM666 708h1v1h-1zM666 750h1v1h-1zM666 771h1v1h-1zM666 791h1v1h-1zM666 812h1v1h-1zM998 22h1v1h-1zM998 43h1v1h-1zM998 63h1v1h-1zM998 84h1v1h-1zM998 126h1v1h-1zM998 147h1v1h-1zM998 167h1v1h-1zM998 188h1v1h-1zM998 230h1v1h-1zM998 251h1v1h-1zM998 271h1v1h-1zM998 292h1v1h-1zM998 334h1v1h-1zM998 355h1v1h-1zM998 375h1v1h-1zM998 396h1v1h-1zM998 438h1v1h-1zM998 459h1v1h-1zM998 479h1v1h-1zM998 500h1v1h-1zM998 542h1v1h-1zM998 563h1v1h-1zM998 583h1v1h-1zM998 604h1v1h-1zM998 646h1v1h-1zM998 667h1v1h-1zM998 687h1v1h-1zM998 708h1v1h-1zM998 750h1v1h-1zM998 771h1v1h-1zM998 791h1v1h-1zM998 812h1v1h-1zM1164 22h1v1h-1zM1164 43h1v1h-1zM1164 63h1v1h-1zM1164 84h1v1h-1zM1164 126h1v1h-1zM1164 147h1v1h-1zM1164 167h1v1h-1zM1164 188h1v1h-1zM1164 230h1v1h-1zM1164 251h1v1h-1zM1164 271h1v1h-1zM1164 292h1v1h-1zM1164 334h1v1h-1zM1164 355h1v1h-1zM1164 375h1v1h-1zM1164 396h1v1h-1zM1164 438h1v1h-1zM1164 459h1v1h-1zM1164 479h1v1h-1zM1164 500h1v1h-1zM1164 542h1v1h-1zM1164 563h1v1h-1zM1164 583h1v1h-1zM1164 604h1v1h-1zM1164 646h1v1h-1zM1164 667h1v1h-1zM1164 687h1v1h-1zM1164 708h1v1h-1zM1164 750h1v1h-1zM1164 771h1v1h-1zM1164 791h1v1h-1zM1164 812h1v1h-1zM1331 22h1v1h-1zM1331 43h1v1h-1zM1331 63h1v1h-1zM1331 84h1v1h-1zM1331 126h1v1h-1zM1331 147h1v1h-1zM1331 167h1v1h-1zM1331 188h1v1h-1zM1331 230h1v1h-1zM1331 251h1v1h-1zM1331 271h1v1h-1zM1331 292h1v1h-1zM1331 334h1v1h-1zM1331 355h1v1h-1zM1331 375h1v1h-1zM1331 396h1v1h-1zM1331 438h1v1h-1zM1331 459h1v1h-1zM1331 479h1v1h-1zM1331 500h1v1h-1zM1331 542h1v1h-1zM1331 563h1v1h-1zM1331 583h1v1h-1zM1331 604h1v1h-1zM1331 646h1v1h-1zM1331 667h1v1h-1zM1331 687h1v1h-1zM1331 708h1v1h-1zM1331 750h1v1h-1zM1331 771h1v1h-1zM1331 791h1v1h-1zM1331 812h1v1h-1zM1497 22h1v1h-1zM1497 43h1v1h-1zM1497 63h1v1h-1zM1497 84h1v1h-1zM1497 126h1v1h-1zM1497 147h1v1h-1zM1497 167h1v1h-1zM1497 188h1v1h-1zM1497 230h1v1h-1zM1497 251h1v1h-1zM1497 271h1v1h-1zM1497 292h1v1h-1zM1497 334h1v1h-1zM1497 355h1v1h-1zM1497 375h1v1h-1zM1497 396h1v1h-1zM1497 438h1v1h-1zM1497 459h1v1h-1zM1497 479h1v1h-1zM1497 500h1v1h-1zM1497 542h1v1h-1zM1497 563h1v1h-1zM1497 583h1v1h-1zM1497 604h1v1h-1zM1497 646h1v1h-1zM1497 667h1v1h-1zM1497 687h1v1h-1zM1497 708h1v1h-1zM1497 750h1v1h-1zM1497 771h1v1h-1zM1497 791h1v1h-1zM1497 812h1v1h-1z" fill="#d0d0d0"/>
<polyline points="3.5,521.5 95.5,521.5 96.5,518.5 97.5,521.5 108.5,521.5 109.5,518.5 110.5,521.5 121.5,521.5 122.5,518.5 123.5,521.5 148.5,521.5 149.5,518.5 150.5,521.5 162.5,521.5 163.5,518.5 164.5,521.5 175.5,521.5 176.5,518.5 177.5,521.5 189.5,521.5 190.5,518.5 191.5,521.5 202.5,521.5 203.5,518.5 204.5,521.5 242.5,521.5 243.5,518.5 244.5,521.5 288.5,521.5 288.5,420.5 289.5,419.5 289.5,316.5 342.5,316.5 342.5,521.5 362.5,521.5 363.5,518.5 364.5,521.5 375.5,521.5 376.5,518.5 377.5,521.5 388.5,521.5 389.5,518.5 390.5,521.5 401.5,521.5 402.5,518.5 403.5,521.5 468.5,521.5 469.5,518.5 470.5,521.5 868.5,521.5 869.5,518.5 870.5,521.5 881.5,521.5 882.5,518.5 883.5,521.5 894.5,521.5 895.5,518.5 896.5,521.5 908.5,521.5 909.5,518.5 910.5,521.5 1036.5,521.5 1037.5,518.5 1038.5,521.5 1101.5,521.5 1102.5,518.5 1103.5,521.5 1166.5,521.5 1167.5,518.5 1168.5,521.5 1486.5,521.5 1487.5,518.5 1488.5,521.5 1566.5,521.5 1566.5,419.5 1567.5,418.5 1567.5,316.5 1619.5,316.5 1619.5,420.5 1620.5,421.5 1620.5,521.5 1662.5,521.5" fill="none" stroke="#d8d800" stroke-width="1"/>
<polyline points="3.5,521.5 169.5,521.5 169.5,319.5 208.5,319.5 208.5,388.5 209.5,389.5 209.5,456.5 210.5,444.5 211.5,441.5 212.5,440.5 233.5,440.5 234.5,443.5 238.5,443.5 239.5,445.5 239.5,448.5 240.5,449.5 240.5,453.5 241.5,454.5 241.5,456.5 242.5,457.5 242.5,469.5 243.5,463.5 243.5,465.5 244.5,463.5 244.5,460.5 245.5,460.5 245.5,457.5 246.5,455.5 247.5,455.5 248.5,456.5 249.5,458.5 250.5,458.5 251.5,458.5 252.5,459.5 253.5,460.5 253.5,465.5 254.5,455.5 254.5,459.5 255.5,460.5 256.5,458.5 257.5,458.5 258.5,457.5 259.5,455.5 260.5,455.5 261.5,456.5 262.5,458.5 263.5,458.5 264.5,458.5 265.5,458.5 266.5,458.5 267.5,458.5 268.5,458.5 269.5,458.5 270.5,458.5 271.5,458.5 272.5,456.5 273.5,452.5 274.5,456.5 274.5,461.5 275.5,465.5 276.5,455.5 276.5,460.5 277.5,459.5 278.5,458.5 279.5,458.5 280.5,458.5 281.5,458.5 282.5,459.5 283.5,461.5 284.5,459.5 285.5,458.5 286.5,455.5 287.5,457.5 288.5,458.5 289.5,460.5 290.5,459.5 291.5,458.5 292.5,458.5 293.5,457.5 294.5,455.5 295.5,455.5 296.5,456.5 297.5,463.5 297.5,465.5 298.5,463.5 298.5,460.5 299.5,460.5 299.5,457.5 300.5,455.5 301.5,455.5 302.5,456.5 303.5,458.5 304.5,458.5 305.5,458.5 306.5,459.5 307.5,460.5 307.5,465.5 308.5,455.5 308.5,459.5 309.5,460.5 310.5,458.5 311.5,458.5 312.5,457.5 313.5,455.5 314.5,455.5 315.5,456.5 316.5,458.5 317.5,458.5 318.5,458.5 319.5,458.5 320.5,458.5 321.5,458.5 322.5,458.5 323.5,458.5 324.5,458.5 325.5,458.5 326.5,456.5 327.5,452.5 328.5,456.5 328.5,461.5 329.5,465.5 330.5,455.5 330.5,460.5 331.5,459.5 332.5,458.5 333.5,458.5 334.5,458.5 335.5,458.5 336.5,459.5 337.5,461.5 338.5,459.5 339.5,458.5 340.5,455.5 341.5,457.5 341.5,458.5 342.5,458.5 342.5,521.5 714.5,521.5 715.5,524.5 716.5,521.5 921.5,521.5 922.5,518.5 923.5,521.5 934.5,521.5 935.5,518.5 936.5,521.5 948.5,521.5 949.5,518.5 950.5,521.5 961.5,521.5 962.5,518.5 963.5,521.5 974.5,521.5 975.5,518.5 976.5,521.5 988.5,521.5 989.5,518.5 990.5,521.5 1001.5,521.5 1002.5,518.5 1003.5,521.5 1014.5,521.5 1015.5,518.5 1016.5,521.5 1027.5,521.5 1028.5,518.5 1029.5,521.5 1040.5,521.5 1041.5,518.5 1042.5,521.5 1054.5,521.5 1055.5,518.5 1056.5,521.5 1067.5,521.5 1068.5,518.5 1069.5,521.5 1081.5,521.5 1082.5,518.5 1083.5,521.5 1094.5,521.5 1095.5,518.5 1096.5,521.5 1108.5,521.5 1109.5,518.5 1110.5,521.5 1121.5,521.5 1122.5,518.5 1123.5,521.5 1134.5,521.5 1135.5,518.5 1136.5,521.5 1148.5,521.5 1149.5,518.5 1150.5,521.5 1153.5,521.5 1154.5,518.5 1155.5,521.5 1160.5,521.5 1161.5,518.5 1162.5,521.5 1174.5,521.5 1175.5,518.5 1176.5,521.5 1188.5,521.5 1189.5,518.5 1190.5,521.5 1446.5,521.5 1446.5,420.5 1447.5,419.5 1447.5,319.5 1486.5,319.5 1486.5,388.5 1487.5,389.5 1487.5,456.5 1488.5,444.5 1489.5,441.5 1490.5,440.5 1511.5,440.5 1512.5,443.5 1516.5,443.5 1517.5,445.5 1517.5,448.5 1518.5,449.5 1518.5,451.5 1519.5,452.5 1519.5,454.5 1520.5,455.5 1520.5,463.5 1521.5,461.5 1521.5,463.5 1522.5,461.5 1522.5,458.5 1523.5,458.5 1523.5,455.5 1524.5,453.5 1525.5,453.5 1526.5,454.5 1527.5,456.5 1528.5,456.5 1529.5,456.5 1530.5,457.5 1531.5,458.5 1531.5,463.5 1532.5,453.5 1532.5,457.5 1533.5,458.5 1534.5,456.5 1535.5,456.5 1536.5,455.5 1537.5,453.5 1538.5,453.5 1539.5,454.5 1540.5,456.5 1541.5,456.5 1542.5,456.5 1543.5,456.5 1544.5,456.5 1545.5,456.5 1546.5,456.5 1547.5,456.5 1548.5,456.5 1549.5,456.5 1550.5,454.5 1551.5,450.5 1552.5,454.5 1552.5,459.5 1553.5,463.5 1554.5,453.5 1554.5,458.5 1555.5,457.5 1556.5,456.5 1557.5,456.5 1558.5,456.5 1559.5,456.5 1560.5,457.5 1561.5,459.5 1562.5,457.5 1563.5,456.5 1564.5,453.5 1565.5,455.5 1566.5,456.5 1567.5,458.5 1568.5,457.5 1569.5,456.5 1570.5,456.5 1571.5,455.5 1572.5,453.5 1573.5,453.5 1574.5,454.5 1575.5,461.5 1575.5,463.5 1576.5,461.5 1576.5,458.5 1577.5,458.5 1577.5,455.5 1578.5,453.5 1579.5,453.5 1580.5,454.5 1581.5,456.5 1582.5,456.5 1583.5,456.5 1584.5,457.5 1585.5,458.5 1585.5,463.5 1586.5,453.5 1586.5,457.5 1587.5,458.5 1588.5,456.5 1589.5,456.5 1590.5,455.5 1591.5,453.5 1592.5,453.5 1593.5,454.5 1594.5,456.5 1595.5,456.5 1596.5,456.5 1597.5,456.5 1598.5,456.5 1599.5,456.5 1600.5,456.5 1601.5,456.5 1602.5,456.5 1603.5,456.5 1604.5,454.5 1605.5,450.5 1606.5,454.5 1606.5,459.5 1607.5,463.5 1608.5,453.5 1608.5,458.5 1609.5,457.5 1610.5,456.5 1611.5,456.5 1612.5,456.5 1613.5,456.5 1614.5,457.5 1615.5,459.5 1616.5,457.5 1617.5,456.5 1618.5,453.5 1619.5,450.5 1619.5,494.5 1620.5,494.5 1620.5,528.5 1621.5,521.5 1662.5,521.5" fill="none" stroke="#00dc00" stroke-width="1"/>
</svg>
<div style="position:absolute;left:1716px;top:81px;width:4px;height:938px;background:#f2f4fb"></div>
<div style="position:absolute;left:1720px;top:81px;width:200px;height:20px;background:linear-gradient(#c5d3e3,#dde8f4)"></div>
<div class="t" style="left:1724px;top:84.84px;font-size:12px;line-height:12px;color:#000;">Control Panel</div>
<svg style="left:1889px;top:86px" width="10" height="10" viewBox="0 0 10 10" shape-rendering="crispEdges"><path d="M2 1h5v5H2z M3 2v4h2V2z" fill="#000" fill-rule="evenodd"/><rect x="1" y="6" width="7" height="1" fill="#000"/><rect x="4" y="7" width="1" height="2" fill="#000"/></svg>
<svg style="left:1905px;top:86px" width="10" height="9" viewBox="0 0 10 9"><path d="M1.5 1.5L8.5 7.8M8.5 1.5L1.5 7.8" stroke="#000" stroke-width="1.9"/></svg>
<div style="position:absolute;left:1720px;top:101px;width:200px;height:23px;background:#e1e1e1;border:1px solid #a9a9a9"></div>
<div class="t" style="left:1724px;top:106.84px;font-size:12px;line-height:12px;color:#000;">Scope</div>
<svg style="left:1906px;top:110px" width="11" height="7" viewBox="0 0 11 7"><path d="M1 1L5 5L9 1" fill="none" stroke="#444" stroke-width="1.35"/></svg>
<div style="position:absolute;left:1720px;top:124px;width:200px;height:24px;background:linear-gradient(#f4f6fb 0px,#f2f4fa 6px,#d8dbe6 14px,#b8bbcd 24px)"></div>
<div style="position:absolute;left:1720px;top:148px;width:200px;height:853px;background:#f0f0f0"></div>
<div style="position:absolute;left:1725px;top:160px;width:200px;height:118px;border:1px solid #dcdcdc;border-right:none"></div><div class="t" style="left:1800px;top:155.69px;font-size:11px;line-height:11px;color:#000;background:#f0f0f0"> Horizontal </div>
<div class="t" style="left:1735px;top:174.69px;font-size:11px;line-height:11px;color:#000;letter-spacing:-0.4px">Time/DIV</div>
<div style="position:absolute;left:1734px;top:192px;width:74px;height:22px;background:#e1e1e1;border:1px solid #adadad"></div><div class="t" style="left:1738px;top:197.69px;font-size:11px;line-height:11px;color:#000;">200.0us</div><svg style="left:1794px;top:201px" width="11" height="7" viewBox="0 0 11 7"><path d="M1 1L5 5L9 1" fill="none" stroke="#444" stroke-width="1.35"/></svg>
<div class="t" style="left:1735px;top:224.69px;font-size:11px;line-height:11px;color:#000;">Format</div>
<div style="position:absolute;left:1734px;top:244px;width:74px;height:22px;background:#e1e1e1;border:1px solid #adadad"></div><div class="t" style="left:1738px;top:249.69px;font-size:11px;line-height:11px;color:#000;">Y-T</div><svg style="left:1794px;top:253px" width="11" height="7" viewBox="0 0 11 7"><path d="M1 1L5 5L9 1" fill="none" stroke="#444" stroke-width="1.35"/></svg>
<svg style="left:1823px;top:180px" width="91" height="91" viewBox="0 0 91 91">
<path d="M19.54 69.03A35.5 34.5 0 1 1 71.46 69.03" fill="none" stroke="#fff" stroke-width="2"/>
<path d="M18.44 70.05A37 36 0 1 1 72.56 70.05" fill="none" stroke="#000" stroke-width="1" shape-rendering="crispEdges"/>
<ellipse cx="45.5" cy="45.5" rx="31" ry="30" fill="none" stroke="#b9b9b9" stroke-width="5"/>
<path d="M67.99 24.85A31 30 0 0 0 23.39 66.53" fill="none" stroke="#d3d3d3" stroke-width="5"/>
<path d="M66.17 26.57L69.80 23.13M25.17 64.78L21.61 68.28" stroke="#000" stroke-width="1"/>
<ellipse cx="45.5" cy="45.5" rx="34" ry="33" fill="none" stroke="#000" stroke-width="1" shape-rendering="crispEdges"/>
<ellipse cx="45.5" cy="45.5" rx="28" ry="27" fill="#0000cc" stroke="#000" stroke-width="1" shape-rendering="crispEdges"/>
<path d="M14.60 75.60L22.00 69.40M76.60 75.60L70.00 69.40" stroke="#000" stroke-width="1.6"/>
<path d="M47.98 40.04L55.00 24.55" stroke="#fff8c0" stroke-width="2"/>
</svg>
<div style="position:absolute;left:1725px;top:297px;width:200px;height:285px;border:1px solid #dcdcdc;border-right:none"></div><div class="t" style="left:1807px;top:292.69px;font-size:11px;line-height:11px;color:#000;background:#f0f0f0"> Vertical </div>
<div style="position:absolute;left:1734px;top:314px;width:13px;height:13px;background:#fff;border:1px solid #333"></div><svg style="left:1734px;top:314px" width="13" height="13" viewBox="0 0 13 13"><path d="M2.5 6.5L5 9L10.5 3.5" fill="none" stroke="#333" stroke-width="1.3"/></svg>
<div class="t" style="left:1750px;top:315.69px;font-size:11px;line-height:11px;color:#000;">CH1</div>
<div style="position:absolute;left:1734px;top:335px;width:74px;height:22px;background:#e1e1e1;border:1px solid #adadad"></div><div class="t" style="left:1738px;top:340.69px;font-size:11px;line-height:11px;color:#000;">5.00V</div><svg style="left:1794px;top:344px" width="11" height="7" viewBox="0 0 11 7"><path d="M1 1L5 5L9 1" fill="none" stroke="#444" stroke-width="1.35"/></svg>
<div style="position:absolute;left:1734px;top:370px;width:74px;height:22px;background:#cccccc;border:1px solid #bfbfbf"></div><div class="t" style="left:1738px;top:375.69px;font-size:11px;line-height:11px;color:#838383;">DC</div><svg style="left:1794px;top:379px" width="11" height="7" viewBox="0 0 11 7"><path d="M1 1L5 5L9 1" fill="none" stroke="#b0b0b0" stroke-width="1.35"/></svg>
<div style="position:absolute;left:1734px;top:405px;width:74px;height:22px;background:#e1e1e1;border:1px solid #adadad"></div><div class="t" style="left:1738px;top:410.69px;font-size:11px;line-height:11px;color:#000;">x1</div><svg style="left:1794px;top:414px" width="11" height="7" viewBox="0 0 11 7"><path d="M1 1L5 5L9 1" fill="none" stroke="#444" stroke-width="1.35"/></svg>
<div style="position:absolute;left:1845px;top:412px;width:13px;height:13px;background:#fff;border:1px solid #333"></div>
<div class="t" style="left:1861px;top:413.69px;font-size:11px;line-height:11px;color:#000;">Invert</div>
<div style="position:absolute;left:1734px;top:454px;width:13px;height:13px;background:#fff;border:1px solid #333"></div><svg style="left:1734px;top:454px" width="13" height="13" viewBox="0 0 13 13"><path d="M2.5 6.5L5 9L10.5 3.5" fill="none" stroke="#333" stroke-width="1.3"/></svg>
<div class="t" style="left:1750px;top:455.69px;font-size:11px;line-height:11px;color:#000;">CH2</div>
<div style="position:absolute;left:1734px;top:475px;width:74px;height:22px;background:#e1e1e1;border:1px solid #adadad"></div><div class="t" style="left:1738px;top:480.69px;font-size:11px;line-height:11px;color:#000;">5.00V</div><svg style="left:1794px;top:484px" width="11" height="7" viewBox="0 0 11 7"><path d="M1 1L5 5L9 1" fill="none" stroke="#444" stroke-width="1.35"/></svg>
<div style="position:absolute;left:1734px;top:510px;width:74px;height:22px;background:#cccccc;border:1px solid #bfbfbf"></div><div class="t" style="left:1738px;top:515.69px;font-size:11px;line-height:11px;color:#838383;">DC</div><svg style="left:1794px;top:519px" width="11" height="7" viewBox="0 0 11 7"><path d="M1 1L5 5L9 1" fill="none" stroke="#b0b0b0" stroke-width="1.35"/></svg>
<div style="position:absolute;left:1734px;top:545px;width:74px;height:22px;background:#e1e1e1;border:1px solid #adadad"></div><div class="t" style="left:1738px;top:550.69px;font-size:11px;line-height:11px;color:#000;">x1</div><svg style="left:1794px;top:554px" width="11" height="7" viewBox="0 0 11 7"><path d="M1 1L5 5L9 1" fill="none" stroke="#444" stroke-width="1.35"/></svg>
<div style="position:absolute;left:1845px;top:552px;width:13px;height:13px;background:#fff;border:1px solid #333"></div>
<div class="t" style="left:1861px;top:553.69px;font-size:11px;line-height:11px;color:#000;">Invert</div>
<svg style="left:1823px;top:315px" width="91" height="91" viewBox="0 0 91 91">
<path d="M19.54 69.03A35.5 34.5 0 1 1 71.46 69.03" fill="none" stroke="#fff" stroke-width="2"/>
<path d="M18.44 70.05A37 36 0 1 1 72.56 70.05" fill="none" stroke="#000" stroke-width="1" shape-rendering="crispEdges"/>
<ellipse cx="45.5" cy="45.5" rx="31" ry="30" fill="none" stroke="#b9b9b9" stroke-width="5"/>
<path d="M67.99 24.85A31 30 0 0 0 23.39 66.53" fill="none" stroke="#d3d3d3" stroke-width="5"/>
<path d="M66.17 26.57L69.80 23.13M25.17 64.78L21.61 68.28" stroke="#000" stroke-width="1"/>
<ellipse cx="45.5" cy="45.5" rx="34" ry="33" fill="none" stroke="#000" stroke-width="1" shape-rendering="crispEdges"/>
<ellipse cx="45.5" cy="45.5" rx="28" ry="27" fill="#ffff00" stroke="#000" stroke-width="1" shape-rendering="crispEdges"/>
<path d="M14.60 75.60L22.00 69.40M76.60 75.60L70.00 69.40" stroke="#000" stroke-width="1.6"/>
<path d="M40.36 49.47L27.70 59.26" stroke="#e4e4a8" stroke-width="2"/>
</svg>
<svg style="left:1823px;top:457px" width="91" height="91" viewBox="0 0 91 91">
<path d="M19.54 69.03A35.5 34.5 0 1 1 71.46 69.03" fill="none" stroke="#fff" stroke-width="2"/>
<path d="M18.44 70.05A37 36 0 1 1 72.56 70.05" fill="none" stroke="#000" stroke-width="1" shape-rendering="crispEdges"/>
<ellipse cx="45.5" cy="45.5" rx="31" ry="30" fill="none" stroke="#b9b9b9" stroke-width="5"/>
<path d="M67.99 24.85A31 30 0 0 0 23.39 66.53" fill="none" stroke="#d3d3d3" stroke-width="5"/>
<path d="M66.17 26.57L69.80 23.13M25.17 64.78L21.61 68.28" stroke="#000" stroke-width="1"/>
<ellipse cx="45.5" cy="45.5" rx="34" ry="33" fill="none" stroke="#000" stroke-width="1" shape-rendering="crispEdges"/>
<ellipse cx="45.5" cy="45.5" rx="28" ry="27" fill="#00ff00" stroke="#000" stroke-width="1" shape-rendering="crispEdges"/>
<path d="M14.60 75.60L22.00 69.40M76.60 75.60L70.00 69.40" stroke="#000" stroke-width="1.6"/>
<path d="M40.06 49.91L27.63 59.97" stroke="#f2e6d2" stroke-width="2"/>
</svg>
<div style="position:absolute;left:1725px;top:600px;width:200px;height:162px;border:1px solid #dcdcdc;border-right:none"></div><div class="t" style="left:1807px;top:595.69px;font-size:11px;line-height:11px;color:#000;background:#f0f0f0"> Trigger </div>
<div class="t" style="left:1738px;top:626.69px;font-size:11px;line-height:11px;color:#000;">Trigger Mode</div>
<div style="position:absolute;left:1834px;top:622px;width:74px;height:22px;background:#e1e1e1;border:1px solid #adadad"></div><div class="t" style="left:1838px;top:627.69px;font-size:11px;line-height:11px;color:#000;">Edge</div><svg style="left:1894px;top:631px" width="11" height="7" viewBox="0 0 11 7"><path d="M1 1L5 5L9 1" fill="none" stroke="#444" stroke-width="1.35"/></svg>
<div class="t" style="left:1738px;top:661.69px;font-size:11px;line-height:11px;color:#000;">Trigger Sweep</div>
<div style="position:absolute;left:1834px;top:657px;width:74px;height:22px;background:#e1e1e1;border:1px solid #adadad"></div><div class="t" style="left:1838px;top:662.69px;font-size:11px;line-height:11px;color:#000;">AUTO</div><svg style="left:1894px;top:666px" width="11" height="7" viewBox="0 0 11 7"><path d="M1 1L5 5L9 1" fill="none" stroke="#444" stroke-width="1.35"/></svg>
<div class="t" style="left:1738px;top:696.69px;font-size:11px;line-height:11px;color:#000;">Trigger Source</div>
<div style="position:absolute;left:1834px;top:692px;width:74px;height:22px;background:#e1e1e1;border:1px solid #adadad"></div><div class="t" style="left:1838px;top:697.69px;font-size:11px;line-height:11px;color:#000;">CH1</div><svg style="left:1894px;top:701px" width="11" height="7" viewBox="0 0 11 7"><path d="M1 1L5 5L9 1" fill="none" stroke="#444" stroke-width="1.35"/></svg>
<div class="t" style="left:1738px;top:731.69px;font-size:11px;line-height:11px;color:#000;">Trigger Slope</div>
<div style="position:absolute;left:1834px;top:727px;width:74px;height:22px;background:#e1e1e1;border:1px solid #adadad"></div><div class="t" style="left:1838px;top:732.69px;font-size:11px;line-height:11px;color:#000;">+</div><svg style="left:1894px;top:736px" width="11" height="7" viewBox="0 0 11 7"><path d="M1 1L5 5L9 1" fill="none" stroke="#444" stroke-width="1.35"/></svg>
<div style="position:absolute;left:1720px;top:1001px;width:200px;height:18px;background:#f0f0f0"></div>
<div style="position:absolute;left:1720px;top:1002px;width:200px;height:1px;background:#fff"></div>
<svg style="left:1724px;top:1005px" width="9" height="11" viewBox="0 0 9 11"><path d="M6.5 1.5L2.2 5.5L6.5 9.5" fill="none" stroke="#505050" stroke-width="2"/></svg>
<div style="position:absolute;left:1737px;top:1003px;width:154px;height:15px;background:#cdcdcd"></div>
<svg style="left:1907px;top:1005px" width="9" height="11" viewBox="0 0 9 11"><path d="M2.5 1.5L6.8 5.5L2.5 9.5" fill="none" stroke="#505050" stroke-width="2"/></svg>
<div style="position:absolute;left:0px;top:1019px;width:1920px;height:21px;background:#f0f0f0"></div>
<div style="position:absolute;left:0px;top:1018px;width:1716px;height:1px;background:#a0a3ad"></div>
<div style="position:absolute;left:1716px;top:1018px;width:204px;height:1px;background:#f0f0f0"></div>
<div style="position:absolute;left:1716px;top:1019px;width:204px;height:1px;background:#dadada"></div>
<div class="t" style="left:4px;top:1024.84px;font-size:12px;line-height:12px;color:#000;">Running...</div>
<div class="t" style="left:1815px;top:1024.84px;font-size:12px;line-height:12px;color:#000;letter-spacing:-0.32px">17-03-2020  15:02</div>
</body></html>
